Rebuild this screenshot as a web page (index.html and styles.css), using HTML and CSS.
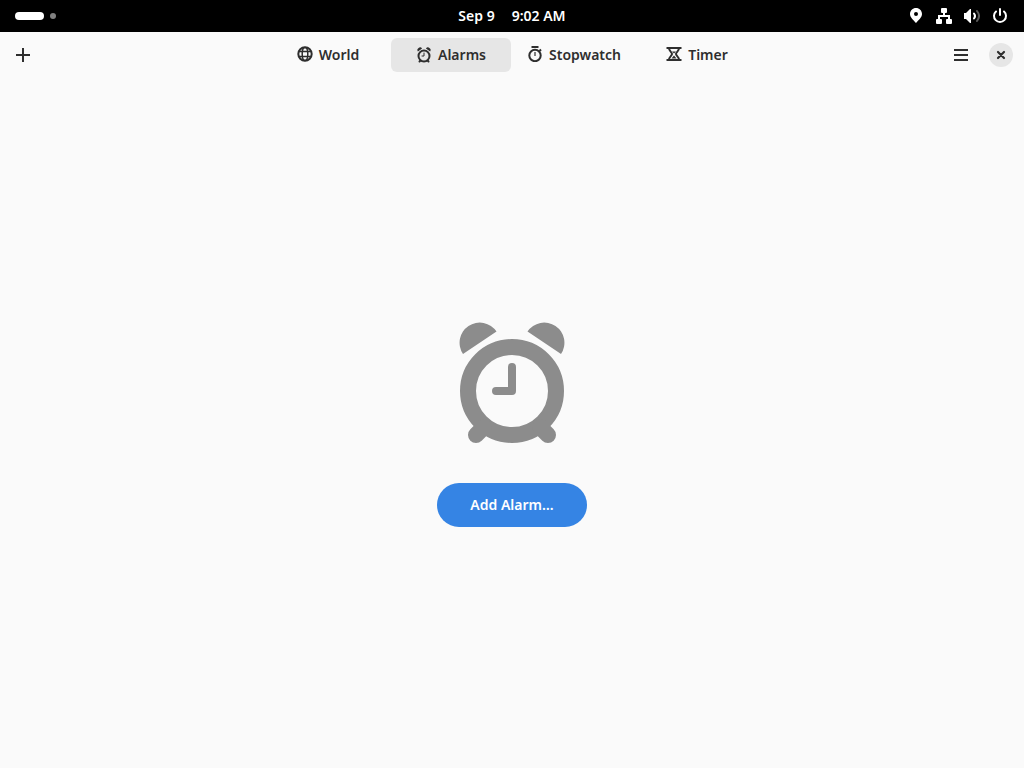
FILE: index.html
```html
<!DOCTYPE html>
<html lang="en">
<head>
<meta charset="utf-8">
<meta name="viewport" content="width=device-width, initial-scale=1">
<title>Clocks</title>
<link rel="stylesheet" href="styles.css">
</head>
<body>
<svg class="sprite" aria-hidden="true">
  <symbol id="alarm" viewBox="0 0 128 128">
    <circle cx="64" cy="72" r="44" fill="none" stroke="currentColor" stroke-width="16"/>
    <path d="M64 48V72H48" fill="none" stroke="currentColor" stroke-width="8" stroke-linecap="round" stroke-linejoin="round"/>
    <path d="M15 35A20 20 0 0 1 48.500 12.500ZM113 35A20 20 0 0 0 79.500 12.500Z" fill="currentColor"/>
    <path d="M28 116L36 108M100 116L92 108" stroke="currentColor" stroke-width="16" stroke-linecap="round"/>
  </symbol>
</svg>
<header class="topbar">
  <button class="workspaces" aria-label="Activities"><span class="pill"></span><span class="dot"></span></button>
  <button class="clock"><span>Sep 9</span><span>9:02 AM</span></button>
  <button class="status" aria-label="System">
    <svg class="icon" viewBox="0 0 16 16"><path fill-rule="evenodd" d="M8 0C4.700 0 2 2.600 2 6C2 9.500 5.500 12 8 15C10.500 12 14 9.500 14 6C14 2.600 11.300 0 8 0ZM8 4A2 2 0 1 1 8 8A2 2 0 1 1 8 4Z" fill="currentColor"/></svg>
    <svg class="icon" viewBox="0 0 16 16"><path d="M6 0H10Q11 0 11 1V4Q11 5 10 5H9V7H14V11H15Q16 11 16 12V15Q16 16 15 16H11Q10 16 10 15V12Q10 11 11 11H12V9H4V11H5Q6 11 6 12V15Q6 16 5 16H1Q0 16 0 15V12Q0 11 1 11H2V7H7V5H6Q5 5 5 4V1Q5 0 6 0Z" fill="currentColor"/></svg>
    <svg class="icon" viewBox="0 0 16 16"><path d="M0 5H2L6 1H7V15H6L2 11H0Z" fill="currentColor"/><path d="M10 5.500Q12 8 10 10.500" fill="none" stroke="currentColor" stroke-width="2" stroke-linecap="round"/><path d="M13 3Q17 8 13 13" fill="none" stroke="#5a5a5a" stroke-width="2" stroke-linecap="round"/></svg>
    <svg class="icon" viewBox="0 0 16 16"><path d="M4 3.500A6 6 0 1 0 12 3.500M8 1V7" fill="none" stroke="currentColor" stroke-width="2" stroke-linecap="round"/></svg>
  </button>
</header>
<div class="headerbar">
  <button class="tool" aria-label="Add alarm"><svg class="icon" viewBox="0 0 16 16"><path d="M8 1V15M1 8H15" stroke="currentColor" stroke-width="2"/></svg></button>
  <nav class="tabs">
    <button class="tab"><svg class="icon raised" viewBox="0 0 16 16"><g fill="none" stroke="currentColor"><circle cx="8" cy="8" r="6.700" stroke-width="2"/><ellipse cx="8" cy="8" rx="2.800" ry="6.500" stroke-width="1.500"/><path d="M2 5.500H14M2 10.500H14" stroke-width="1.500"/></g></svg>World</button>
    <button class="tab active" aria-current="page"><svg class="icon"><use href="#alarm"/></svg>Alarms</button>
    <button class="tab"><svg class="icon raised" viewBox="0 0 16 16"><g fill="none" stroke="currentColor"><path d="M4.500 1H11.500M12.500 5L14 3.500" stroke-width="2"/><circle cx="8" cy="9.500" r="5.700" stroke-width="2"/><path d="M8 6V10" stroke-width="1.200"/></g></svg>Stopwatch</button>
    <button class="tab"><svg class="icon raised" viewBox="0 0 16 16"><path d="M0.500 2H15.500M0.500 14H15.500" stroke="currentColor" stroke-width="2"/><path d="M3 2C3 5.500 6 6 6 8C6 10 3 10.500 3 14M13 2C13 5.500 10 6 10 8C10 10 13 10.500 13 14" fill="none" stroke="currentColor" stroke-width="2"/><path d="M6 5.500H10L8 7.500ZM8 9.500L10.500 12.500H5.500Z" fill="currentColor"/></svg>Timer</button>
  </nav>
  <div class="end">
    <button class="tool" aria-label="Main menu"><svg class="icon" viewBox="0 0 16 16"><path d="M1 3H15M1 8H15M1 13H15" stroke="currentColor" stroke-width="2"/></svg></button>
    <button class="close" aria-label="Close"><svg class="icon" viewBox="0 0 16 16"><path d="M5 5L11 11M11 5L5 11" stroke="currentColor" stroke-width="2.200" stroke-linecap="round"/></svg></button>
  </div>
</div>
<main class="empty">
  <svg class="hero" aria-hidden="true"><use href="#alarm"/></svg>
  <button class="add">Add Alarm…</button>
</main>
</body>
</html>
```
FILE: styles.css
```css
* { box-sizing: border-box; }
body {
  margin: 0;
  min-height: 100vh;
  display: flex;
  flex-direction: column;
  background: #fafafa;
  color: #2e2e2e;
  font: 600 14px/20px "Noto Sans", "Open Sans", sans-serif;
}
button {
  border: 0;
  padding: 0;
  background: none;
  color: inherit;
  font: inherit;
  display: flex;
  align-items: center;
  justify-content: center;
}
.sprite { position: absolute; width: 0; height: 0; }
.icon { width: 16px; height: 16px; flex: none; display: block; }
.topbar, .headerbar {
  display: grid;
  grid-template-columns: 1fr auto 1fr;
  align-items: center;
}
.topbar { height: 32px; background: #000; color: #fff; }
.workspaces { justify-self: start; gap: 6px; padding-left: 15px; height: 32px; }
.pill { width: 29px; height: 8px; border-radius: 4px; background: #fff; }
.dot { width: 6px; height: 6px; border-radius: 50%; background: #808080; }
.clock { gap: 17px; }
.status { justify-self: end; gap: 12px; padding-right: 16px; }
.headerbar { height: 46px; padding: 0 6px; }
.tool { width: 34px; height: 34px; border-radius: 6px; }
.tabs { display: flex; gap: 3px; padding-left: 1px; }
.tab { width: 120px; height: 34px; gap: 6px; border-radius: 6px; }
.raised { margin-bottom: 2px; }
.active { background: #e6e6e6; }
.end { justify-self: end; display: flex; align-items: center; gap: 11px; padding-right: 5px; }
.close { width: 24px; height: 24px; border-radius: 50%; background: #e6e6e6; }
.empty {
  flex: 1;
  display: flex;
  flex-direction: column;
  align-items: center;
  justify-content: center;
  gap: 36px;
}
.hero { width: 128px; height: 128px; color: #8c8c8c; }
.add {
  min-width: 150px;
  height: 44px;
  padding: 0 32px;
  border-radius: 22px;
  background: #3584e4;
  color: #fff;
}
```
